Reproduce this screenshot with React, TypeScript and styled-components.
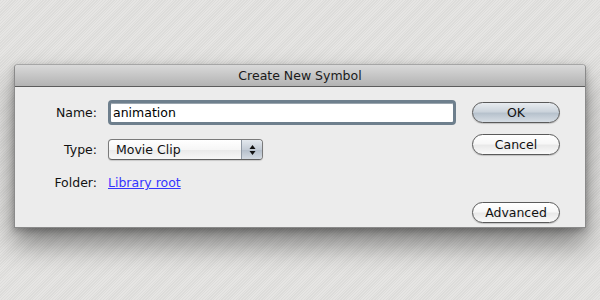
import styled, { createGlobalStyle } from 'styled-components';

const GlobalStyle = createGlobalStyle`
    html, body {
        margin: 0;
        padding: 0;
    }
    body {
        font-family: "DejaVu Sans", "Liberation Sans", sans-serif;
        font-size: 12.5px;
        color: #111;
    }
`;

const Desk = styled.div`
    width: 600px;
    height: 300px;
    box-sizing: border-box;
    padding: 64px 0 0 14px;
    overflow: hidden;
    background-color: #e0dfdd;
    background-image: repeating-linear-gradient(
        -45deg,
        rgba(255, 255, 255, 0.18) 0px,
        rgba(255, 255, 255, 0.18) 1px,
        rgba(0, 0, 0, 0.015) 1px,
        rgba(0, 0, 0, 0.015) 2px
    );
`;

const Sheet = styled.div`
    width: 572px;
    height: 164px;
    display: flex;
    flex-direction: column;
    background: #ececec;
    border: 1px solid #8a8a8a;
    border-top-color: #a6a6a6;
    border-radius: 4px 4px 0 0;
    box-sizing: border-box;
    box-shadow: 0 16px 28px rgba(0, 0, 0, 0.45), 0 3px 7px rgba(0, 0, 0, 0.25);
`;

const TitleBar = styled.div`
    height: 21px;
    flex: none;
    display: flex;
    align-items: center;
    justify-content: center;
    background: linear-gradient(#d9d9d9, #c2c2c2 60%, #b3b3b3);
    border-bottom: 1px solid #5c5c5c;
    border-radius: 3px 3px 0 0;
    font-size: 12.5px;
    color: #1a1a1a;
`;

const Body = styled.div`
    flex: 1;
    display: flex;
    padding: 13px 25px 4px 0;
    gap: 16px;
`;

const Form = styled.div`
    flex: 1;
    display: grid;
    grid-template-columns: 82px 1fr;
    grid-template-rows: 25px 21px 18px;
    column-gap: 11px;
    row-gap: 14px;
    align-content: start;
    align-items: center;
`;

const Label = styled.label`
    text-align: right;
    line-height: 18px;
`;

const NameInput = styled.input`
    width: 100%;
    height: 25px;
    box-sizing: border-box;
    border: 3px solid #6e7f8d;
    border-radius: 4px;
    box-shadow: inset 0 1px 0 #9aa5ae;
    background: #fff;
    padding: 0 2px;
    font-family: inherit;
    font-size: 12.5px;
    color: #000;
    outline: none;
`;

const Select = styled.div`
    width: 155px;
    height: 21px;
    display: flex;
    box-sizing: border-box;
    border: 1px solid #7a7a7a;
    border-bottom-color: #5f5f5f;
    border-radius: 4px;
    overflow: hidden;
    background: linear-gradient(#ffffff, #f6f6f6 50%, #e9e9e9 51%, #f7f7f7);
    box-shadow: 0 1px 1px rgba(0, 0, 0, 0.15);
`;

const SelectText = styled.span`
    flex: 1;
    padding-left: 7px;
    line-height: 19px;
`;

const Stepper = styled.span`
    width: 20px;
    flex: none;
    display: flex;
    flex-direction: column;
    align-items: center;
    justify-content: center;
    border-left: 1px solid #8f98a3;
    background: linear-gradient(#e3e8ee, #c4ccd6 50%, #b3bdc9 51%, #d3dae2);
`;

const Link = styled.a`
    color: #3535ff;
    text-decoration: underline;
    line-height: 18px;
    cursor: pointer;
`;

const Buttons = styled.div`
    width: 88px;
    display: flex;
    flex-direction: column;
    gap: 11px;
    padding-top: 2px;
`;

const Button = styled.button<{ $default?: boolean; $bottom?: boolean }>`
    width: 88px;
    height: 21px;
    padding: 0;
    border: 1px solid #5a5a5a;
    border-radius: 11px;
    font-family: inherit;
    font-size: 12.5px;
    color: #111;
    margin-top: ${p => (p.$bottom ? 'auto' : '0')};
    background: ${p =>
        p.$default
            ? 'linear-gradient(#e8ecf0, #ccd4dc 45%, #b7c2cd 55%, #d6dde4)'
            : 'linear-gradient(#ffffff, #f7f7f7 45%, #e9e9e9 55%, #fafafa)'};
    box-shadow: 0 1px 1px rgba(0, 0, 0, 0.18);
`;

function Arrows() {
    return (
        <svg width="7" height="12" viewBox="0 0 7 12">
            <path d="M3.5 1 L6.5 5 L0.5 5 Z" fill="#111" />
            <path d="M3.5 11 L6.5 7 L0.5 7 Z" fill="#111" />
        </svg>
    );
}

export default function App() {
    return (
        <>
            <GlobalStyle />
            <Desk>
                <Sheet>
                    <TitleBar>Create New Symbol</TitleBar>
                    <Body>
                        <Form>
                            <Label>Name:</Label>
                            <NameInput defaultValue="animation" />
                            <Label>Type:</Label>
                            <Select>
                                <SelectText>Movie Clip</SelectText>
                                <Stepper>
                                    <Arrows />
                                </Stepper>
                            </Select>
                            <Label>Folder:</Label>
                            <div>
                                <Link>Library root</Link>
                            </div>
                        </Form>
                        <Buttons>
                            <Button $default>OK</Button>
                            <Button>Cancel</Button>
                            <Button $bottom>Advanced</Button>
                        </Buttons>
                    </Body>
                </Sheet>
            </Desk>
        </>
    );
}
